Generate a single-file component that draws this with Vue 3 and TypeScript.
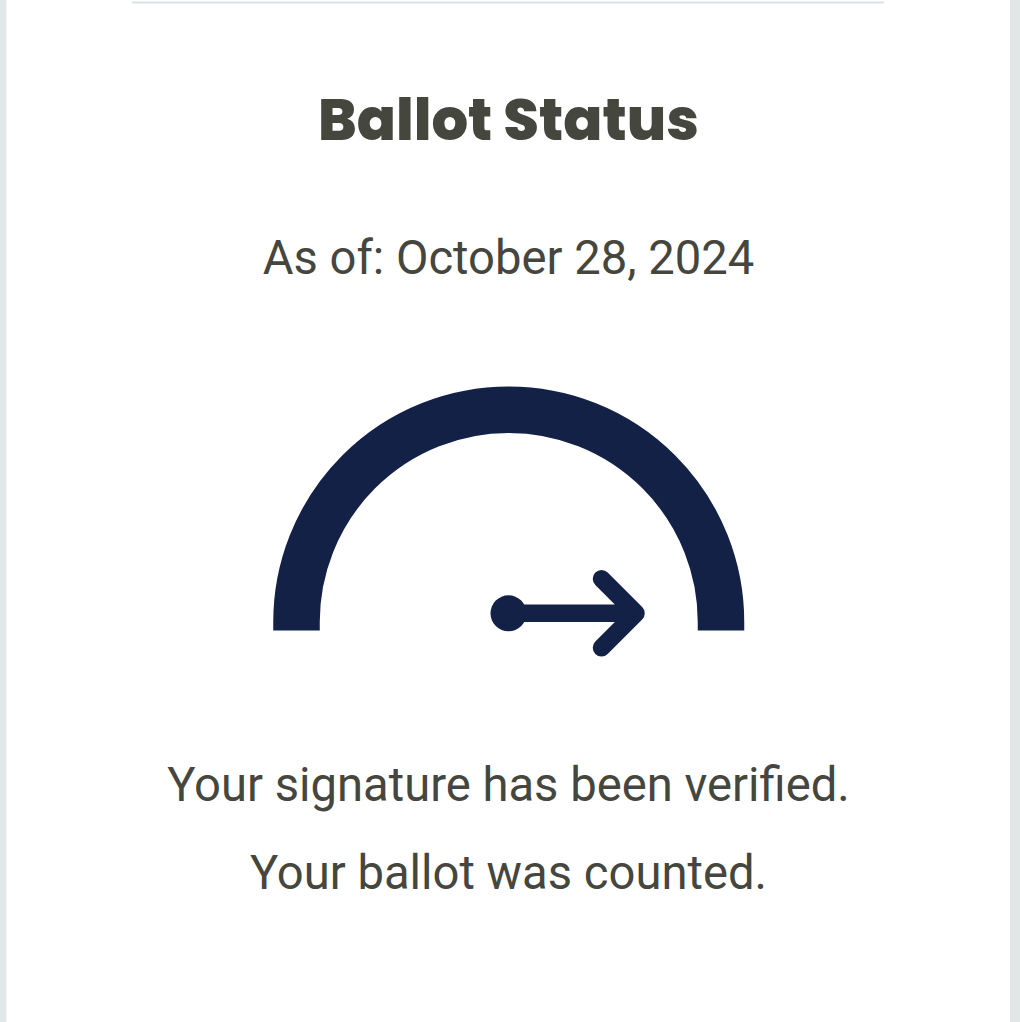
<script setup lang="ts">
const title: string = 'Ballot Status'
const asOf: string = 'As of: October 28, 2024'
const messages: string[] = ['Your signature has been verified.', 'Your ballot was counted.']
</script>

<template>
  <div class="page">
    <main class="card">
      <hr class="rule" />
      <h1 class="title">{{ title }}</h1>
      <p class="date">{{ asOf }}</p>
      <svg class="gauge" width="474" height="272" viewBox="272 386 474 272" aria-hidden="true">
        <path d="M296.500 630.500V622A212 212 0 0 1 721 622V630.500" fill="none" stroke="#132147" stroke-width="46.500" />
        <circle cx="508.500" cy="613.300" r="18" fill="#132147" />
        <path d="M508 613.300H636M601.500 578.800L636 613.300L601.500 647.800" fill="none" stroke="#132147" stroke-width="17.500" stroke-linecap="round" stroke-linejoin="round" />
      </svg>
      <p v-for="message in messages" :key="message" class="message">{{ message }}</p>
    </main>
  </div>
</template>

<style>
body { margin: 0; }
</style>

<style scoped>
.page {
  box-sizing: border-box;
  height: 1022px;
  padding: 0 10px 0 6px;
  background: #e1e7e7;
  overflow: hidden;
}
.card {
  box-sizing: border-box;
  display: flex;
  flex-direction: column;
  align-items: center;
  height: 100%;
  border-left: 1px solid #f5f8f8;
  background: #fff;
  color: #45463e;
  font-family: Roboto, sans-serif;
}
.rule {
  width: 752px;
  height: 1px;
  margin: 1px 1px 0 0;
  border: solid #eef1f4;
  border-width: 1px 0;
  background: #dbe2e7;
}
.title {
  margin: 72px 0 0;
  font: 800 57.6px/88px Poppins, Inter, sans-serif;
  white-space: nowrap;
}
.date {
  margin: 59px 0 0;
  font-size: 47.2px;
  line-height: 70px;
  white-space: nowrap;
}
.gauge {
  margin: 93px 0 82px;
  flex: none;
}
.message {
  margin: 0;
  font-size: 47.2px;
  line-height: 88px;
  white-space: nowrap;
}
.gauge + .message {
  margin-top: 1px;
}
</style>
